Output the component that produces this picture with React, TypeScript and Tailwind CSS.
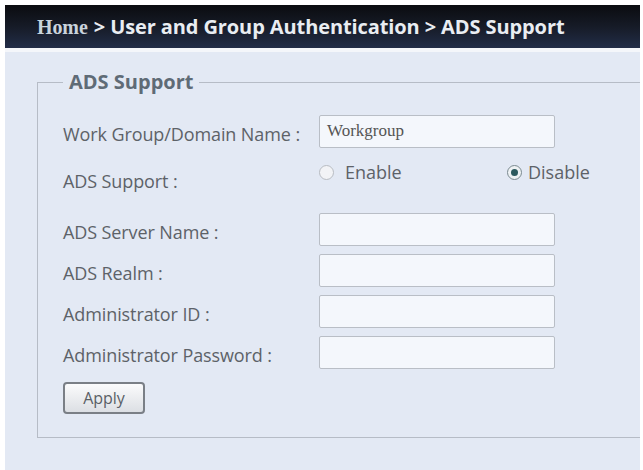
import React from "react";

const labelCls = "w-[256px] shrink-0 text-[18px] text-[#5d6268] font-['Open_Sans',sans-serif] tracking-[-0.1px]";

function TextBox({ value = "" }: { value?: string }) {
  return (
    <div className="w-[236px] h-[33px] shrink-0 rounded-[2px] border border-[#b9bec6] bg-[#f4f7fc] flex items-center px-[7px] text-[17px] text-[#555] font-['Liberation_Serif',serif]">
      {value}
    </div>
  );
}

function Radio({ checked }: { checked?: boolean }) {
  return (
    <span className={"w-[15px] h-[15px] rounded-full border flex items-center justify-center " + (checked ? "border-[#7b8a90] bg-[#eef2f4]" : "border-[#b8bcc2] bg-[#f2f3f6]")}>
      {checked ? <span className="w-[7px] h-[7px] rounded-full bg-[#2c5a5e]" /> : null}
    </span>
  );
}

export default function App() {
  return (
    <div className="w-[643px] h-[470px] bg-white pt-[5px] pl-[5px] pr-[3px] flex flex-col overflow-hidden">
      <div className="h-[43px] shrink-0 bg-gradient-to-b from-[#0b0c10] via-[#161b27] to-[#222d48] flex items-center pl-[32px] text-[20px] font-bold font-['Open_Sans',sans-serif] tracking-[-0.1px]">
        <span className="font-['Liberation_Serif',serif] text-[#c9d3dc] font-bold text-[20px] mr-[6px]">Home</span>
        <span className="text-[#e9edf2]">&gt; User and Group Authentication &gt; ADS Support</span>
      </div>
      <div className="h-[4px] shrink-0 bg-[#f4f6fa]" />
      <div className="flex-1 bg-[#e3e9f4] pt-[18px] pl-[32px]">
        <fieldset className="border border-r-0 border-[#b6bcc6] pl-[25px] h-[368px]">
          <legend className="px-[6px] text-[20px] font-bold text-[#5f6b76] font-['Open_Sans',sans-serif] leading-[24px]">ADS Support</legend>
          <div className="flex flex-col pt-[20px]">
            <div className="flex items-center h-[34px]">
              <div className={labelCls + " mt-[6px]"}>Work Group/Domain Name :</div>
              <TextBox value="Workgroup" />
            </div>
            <div className="flex items-center h-[30px] mt-[9px]">
              <div className={labelCls + " mt-[18px]"}>ADS Support :</div>
              <div className="flex items-center gap-[11px] w-[188px]">
                <Radio />
                <span className="text-[18px] text-[#5d6268] font-['Open_Sans',sans-serif]">Enable</span>
              </div>
              <div className="flex items-center gap-[6px]">
                <Radio checked />
                <span className="text-[18px] text-[#5d6268] font-['Open_Sans',sans-serif]">Disable</span>
              </div>
            </div>
            <div className="flex flex-col gap-[8px] mt-[26px]">
              {["ADS Server Name :", "ADS Realm :", "Administrator ID :", "Administrator Password :"].map((l) => (
                <div key={l} className="flex items-center h-[33px]">
                  <div className={labelCls + " mt-[6px]"}>{l}</div>
                  <TextBox />
                </div>
              ))}
            </div>
            <div className="mt-[13px]">
              <button className="w-[82px] h-[32px] rounded-[4px] border-2 border-[#7a7f86] bg-gradient-to-b from-[#fbfbfc] to-[#dcdfe4] text-[16px] text-[#5a5f66] font-['Open_Sans',sans-serif]">
                Apply
              </button>
            </div>
          </div>
        </fieldset>
      </div>
    </div>
  );
}
